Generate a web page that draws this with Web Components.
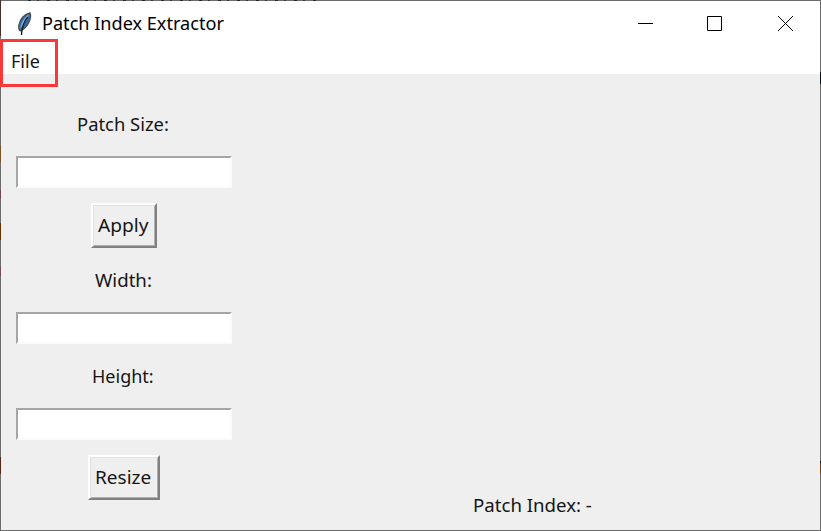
<!DOCTYPE html>
<html lang="en"><head><meta charset="utf-8"><title>Patch Index Extractor</title>
<style>html,body{margin:0;height:100%;overflow:hidden}body{font-family:"Noto Sans","Open Sans",sans-serif;font-size:18px;color:#151515}</style>
</head><body>
<app-window>
  <title-bar slot="title"><fit-text width="182" style="font-size:18.6px;color:#000">Patch Index Extractor</fit-text></title-bar>
  <menu-bar slot="menu"><fit-text width="29">File</fit-text></menu-bar>
  <control-panel slot="side">
    <tk-label><fit-text width="92">Patch Size:</fit-text></tk-label>
    <tk-entry></tk-entry>
    <tk-button><fit-text width="50">Apply</fit-text></tk-button>
    <tk-label><fit-text width="57">Width:</fit-text></tk-label>
    <tk-entry></tk-entry>
    <tk-label><fit-text width="62">Height:</fit-text></tk-label>
    <tk-entry></tk-entry>
    <tk-button><fit-text width="56">Resize</fit-text></tk-button>
  </control-panel>
  <status-line slot="main"><fit-text width="119">Patch Index: -</fit-text></status-line>
</app-window>
<script>
function define(name, html, ready) {
  customElements.define(name, class extends HTMLElement {
    constructor() { super(); this.attachShadow({mode:'open'}).innerHTML = html; }
    connectedCallback() { if (ready) ready(this); }
  });
}
// Condenses or widens its text to the given advance width.
define('fit-text', `<style>:host{display:block;line-height:24px;height:24px;white-space:nowrap}span{display:inline-block;transform-origin:0 50%}</style><span><slot></slot></span>`, el => {
  const w = +el.getAttribute('width'), s = el.shadowRoot.querySelector('span');
  el.style.width = w + 'px';
  s.style.transform = `scaleX(${w / s.offsetWidth})`;
});
define('app-window', `<style>
:host{display:grid;grid-template-rows:45px 28px 1fr;box-sizing:border-box;width:821px;height:531px;border:1px solid #6c6c6c;background:#efefef;position:relative}
.body{display:grid;grid-template-columns:247px 1fr;min-height:0}
.mark{position:absolute;left:-1px;top:38px;width:58px;height:48px;box-sizing:border-box;border:3px solid #fb3838}
.edge{position:absolute;top:-1px;width:1px;height:531px}
.l{left:-1px;background:linear-gradient(#4a2b2b 0 36px,#6c6c6c 36px 145px,#7c5327 145px 162px,#6c6c6c 162px 190px,#73485a 190px 199px,#6c6c6c 199px 223px,#663400 223px 240px,#6c6c6c 240px 267px,#73485a 267px 276px,#6c6c6c 276px 457px,#542715 457px 474px,#6c6c6c 474px)}
.r{right:-1px;background:linear-gradient(#6c6c6c 0 72px,#0b111a 72px 84px,#6c6c6c 84px 461px,#101010 461px 463px,#694015 463px 474px,#6c6c6c 474px)}
.t{position:absolute;top:-1px;left:27px;width:292px;height:1px;background:repeating-linear-gradient(90deg,#22262e 0 3px,#6c6c6c 3px 9px,#33353b 9px 11px,#6c6c6c 11px 19px)}
</style><slot name="title"></slot><slot name="menu"></slot><div class="body"><slot name="side"></slot><slot name="main"></slot></div><div class="t"></div><div class="edge l"></div><div class="edge r"></div><div class="mark"></div>`);
define('title-bar', `<style>:host{display:flex;align-items:center;background:#fff;padding-left:14px}
.feather{width:18px;height:24px;margin-right:9px}slot{display:block;padding-bottom:2px}.controls{display:flex;margin-left:auto;padding-right:26px}.controls svg{width:16px;height:16px;display:block}.max{margin:0 55px 0 53px}</style>
<svg class="feather" viewBox="0 0 18 24"><path d="M15 1C9.8 1.8 4.9 7 3.9 13c-.4 2.5-.1 4.9 1.4 5.9 3-.8 7.1-4.9 8.9-9.2 1.3-3.2 1.8-6.6.8-8.7Z" fill="#3672b0" stroke="#4a4a4a" stroke-width="1.3"/><path d="M13.8 2.6C9.3 5.4 6 11 5.3 16.5 7.8 13.7 11.2 10 12.2 7Z" fill="#7fb0e0"/><path d="M12.8 5C9.5 9 7 14 6.4 23" fill="none" stroke="#181818" stroke-width="1.4"/><path d="m8 14 2.5-1.1M8.7 11.1l3.4-1.4" stroke="#245182" stroke-width=".8"/></svg>
<slot></slot><div class="controls">
<svg viewBox="0 0 16 16"><path d="M0 7.5h15" stroke="#000" shape-rendering="crispEdges"/></svg>
<svg class="max" viewBox="0 0 16 16"><path d="M.5.5h14v14h-14z" fill="none" stroke="#000"/></svg>
<svg viewBox="0 0 16 16"><path d="m0 0 15 15M15 0 0 15" stroke="#000"/></svg></div>`);
define('menu-bar', `<style>:host{display:flex;align-items:center;background:#fff;padding:2px 0 0 10px}</style><slot></slot>`);
define('control-panel', `<style>:host{display:flex;flex-direction:column;align-items:center;gap:15px;width:216px;padding:33px 0 0 15px}</style><slot></slot>`);
define('tk-label', `<style>:host{display:flex;align-items:center;height:34px;padding-right:2px}</style><slot></slot>`);
define('tk-entry', `<style>:host{display:block;width:216px;height:32px;box-sizing:border-box;background:#fff;border:2px solid;border-color:#a6a6a6 #fbfbfb #fbfbfb #a6a6a6}</style>`);
define('tk-button', `<style>:host{display:flex;align-items:center;justify-content:center;height:45px;box-sizing:border-box;padding:0 7px 2px 5px;border:2px solid;border-color:#fff #808080 #808080 #fff;box-shadow:inset 1px 1px #e2e2e2,inset -1px -1px #b0b0b0;background:#efefef}</style><slot></slot>`);
define('status-line', `<style>:host{display:flex;align-items:flex-end;padding:0 0 13px 225px}</style><slot></slot>`);
</script></body></html>
